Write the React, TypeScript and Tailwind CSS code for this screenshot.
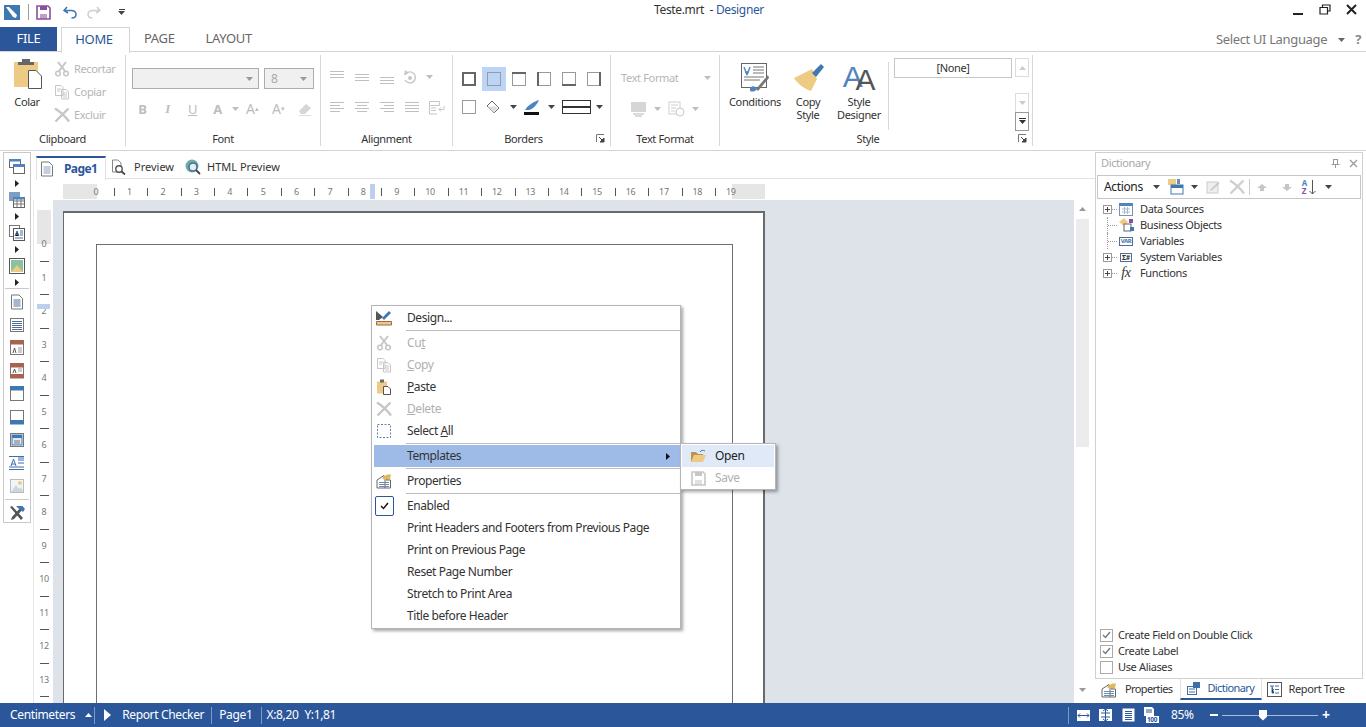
import type { ReactNode } from 'react';

const Svg = ({ w = 16, h = 16, children }: { w?: number; h?: number; children: ReactNode }) => (
  <svg width={w} height={h} viewBox={`0 0 ${w} ${h}`} fill="none" className="block shrink-0">
    {children}
  </svg>
);

const Arrow = ({ color = '#444', up = false }: { color?: string; up?: boolean }) => (
  <svg width="7" height="4" viewBox="0 0 7 4" className="block shrink-0">
    <path d={up ? 'M0 4 L3.5 0 L7 4Z' : 'M0 0 L7 0 L3.5 4Z'} fill={color} />
  </svg>
);

const Scissors = ({ c = '#c6c6c6' }: { c?: string }) => (
  <Svg>
    <path d="M4 1 L11 10 M12 1 L5 10" stroke={c} strokeWidth="2" />
    <circle cx="4" cy="12.5" r="2.3" stroke={c} strokeWidth="1.5" />
    <circle cx="12" cy="12.5" r="2.3" stroke={c} strokeWidth="1.5" />
  </Svg>
);
const CopyIcon = ({ c = '#c6c6c6' }: { c?: string }) => (
  <Svg>
    <path d="M1.5 1.5 H7 L9 3.5 V11.5 H1.5Z M7.5 5.5 H12 L14.5 8 V15 H7.5Z" fill="#fff" stroke={c} />
    <path d="M3 5 H7 M3 7 H6 M9 9 H13 M9 11 H13 M9 13 H13" stroke={c} />
  </Svg>
);
const Cross = ({ c = '#c6c6c6' }: { c?: string }) => (
  <Svg>
    <path d="M1 1.5 C5 4 11 9 15 14.5 M14.5 1.5 L1.5 14.5" stroke={c} strokeWidth="2.4" />
  </Svg>
);
const PasteSmall = () => (
  <Svg>
    <rect x="1" y="2.5" width="10" height="12" fill="#eecb85" />
    <rect x="4" y="0.5" width="4" height="3" fill="#6b6b6b" />
    <path d="M7.5 7.5 H12 L14.5 10 V15.5 H7.5Z" fill="#fff" stroke="#555" />
  </Svg>
);
const PropsIcon = () => (
  <Svg>
    <path d="M1 7 L8 2.5 L9 7 V15 H1Z" fill="#fff" stroke="#666" />
    <path d="M6 5 L11 1.5 H15 L14 6 L9 7.5Z" fill="#e0b95c" />
    <path d="M10 7 H14.5 V15 H9" stroke="#666" />
    <path d="M3 9.5 H13 M3 11.5 H13 M3 13.5 H13" stroke="#6b8db5" />
  </Svg>
);
const DocLines = ({ c = '#4f6f9a' }: { c?: string }) => (
  <Svg>
    <path d="M2.5 1 H10 L13.5 4.5 V15 H2.5Z" fill="#fff" stroke="#777" />
    <path d="M4.5 6 H11.5 M4.5 8 H11.5 M4.5 10 H11.5 M4.5 12 H11.5" stroke={c} />
  </Svg>
);
const SaveIcon = ({ c }: { c: string }) => (
  <Svg w={15} h={15}>
    <path d="M1 1 H12 L14 3 V14 H1Z" stroke={c} strokeWidth="1.6" />
    <rect x="4" y="1" width="7" height="4" fill={c} />
    <rect x="4" y="9" width="7" height="5" fill={c} opacity="0.55" />
  </Svg>
);

const AlignIcon = ({ rows }: { rows: [number, number, number][] }) => (
  <Svg w={16} h={14}>
    {rows.map(([y, a, b], i) => (
      <path key={i} d={`M${a} ${y + 0.5} H${b}`} stroke="#bfbfbf" />
    ))}
  </Svg>
);

const BorderBox = ({ t = 1, r = 1, b = 1, l = 1 }: { t?: number; r?: number; b?: number; l?: number }) => (
  <Svg w={14} h={14}>
    <rect x="0.5" y="0.5" width="13" height="13" stroke="#9a9a9a" />
    {t > 1 && <path d="M0 1 H14" stroke="#666" strokeWidth="2" />}
    {b > 1 && <path d="M0 13 H14" stroke="#666" strokeWidth="2" />}
    {l > 1 && <path d="M1 0 V14" stroke="#666" strokeWidth="2" />}
    {r > 1 && <path d="M13 0 V14" stroke="#666" strokeWidth="2" />}
  </Svg>
);

const SmallAction = ({ icon, label }: { icon: ReactNode; label: string }) => (
  <div className="flex items-center gap-[4px] text-[11px] leading-4 text-[#b5b5b5]">
    {icon}
    <span>{label}</span>
  </div>
);

const Group = ({
  label,
  width,
  launcher,
  children,
}: {
  label: string;
  width: string;
  launcher?: boolean;
  children: ReactNode;
}) => (
  <div className={`flex flex-col h-[91px] border-r border-[#d9d9d9] relative ${width}`}>
    <div className="flex-1 min-h-0">{children}</div>
    <div className={`h-[16px] mb-[-1px] text-center text-[11px] leading-4 text-[#333] ${launcher ? 'pr-4' : ''}`}>{label}</div>
    {launcher && (
      <div className="absolute right-[5px] bottom-[3px]">
        <svg width="9" height="9" viewBox="0 0 9 9" className="block">
          <path d="M0.5 8 V0.5 H8" stroke="#777" fill="none" />
          <path d="M3 3 L7 7 M8 4 V8 H4Z" stroke="#444" fill="#444" />
        </svg>
      </div>
    )}
  </div>
);

const StatusSep = () => <div className="w-px h-[17px] bg-[#7d9ac6] shrink-0" />;

function TitleBar() {
  return (
    <div className="h-[26px] flex items-start">
      <div className="w-[654px] flex items-center pt-1 pl-1">
        <svg width="16" height="15" viewBox="0 0 16 15" className="block">
          <rect width="16" height="15" fill="#3f78b0" />
          <path d="M2 2 L5 2 L13 10 L12 13 L9 12 Z" fill="#fff" />
        </svg>
        <div className="w-px h-[16px] bg-[#9b9b9b] ml-2 mr-[7px]" />
        <SaveIcon c="#8a4f9e" />
        <div className="ml-3">
          <svg width="14" height="13" viewBox="0 0 14 13" className="block">
            <path d="M4 1 L1 4.5 L5 7 M1.5 4.5 H8 C11 4.5 13 6 13 8.5 C13 11 11 12 8.5 12" stroke="#3f78b0" strokeWidth="1.5" fill="none" />
          </svg>
        </div>
        <div className="ml-[10px]">
          <svg width="14" height="13" viewBox="0 0 14 13" className="block">
            <path d="M10 1 L13 4.5 L9 7 M12.5 4.5 H6 C3 4.5 1 6 1 8.5 C1 11 3 12 5.5 12" stroke="#cfcfcf" strokeWidth="1.5" fill="none" />
          </svg>
        </div>
        <div className="ml-[17px] flex flex-col items-center gap-px">
          <div className="w-[6px] h-px bg-[#444]" />
          <Arrow />
        </div>
      </div>
      <div className="pt-[2px] text-[12px] leading-4 text-[#333] whitespace-pre">
        Teste.mrt{'  '}- <span className="text-[#2b579a]">Designer</span>
      </div>
      <div className="flex-1" />
      <div className="flex items-center gap-[15px] pt-[3px] pr-[9px]">
        <div className="w-[10px] h-[2px] bg-[#222] mt-[10px]" />
        <svg width="12" height="11" viewBox="0 0 12 11" className="block ml-[1px]">
          <path d="M3.5 3 V1 H11 V7 H9 M1 3.5 H8.5 V10 H1Z" stroke="#222" strokeWidth="1.2" fill="none" />
        </svg>
        <svg width="11" height="11" viewBox="0 0 11 11" className="block">
          <path d="M1 1 L10 10 M10 1 L1 10" stroke="#222" strokeWidth="2" />
        </svg>
      </div>
    </div>
  );
}

function TabRow() {
  return (
    <div className="h-[26px] flex border-b border-[#d4d4d4] text-[13px]">
      <div className="w-[57px] mt-px bg-[#2b579a] text-white flex items-center justify-center">FILE</div>
      <div className="ml-1 w-[69px] h-[26px] mt-px border border-b-0 border-[#d4d4d4] bg-white text-[#2b579a] flex items-center justify-center pr-[3px] pb-[2px]">
        HOME
      </div>
      <div className="ml-[14px] text-[#666] flex items-center">PAGE</div>
      <div className="ml-[31px] text-[#666] flex items-center">LAYOUT</div>
      <div className="flex-1" />
      <div className="flex items-center text-[#777] pt-[3px]">
        <span>Select UI Language</span>
        <span className="ml-[11px]"><Arrow color="#666" /></span>
        <span className="ml-[10px] mr-[5px] font-bold text-[#888]">?</span>
      </div>
    </div>
  );
}

function Ribbon() {
  return (
    <div className="h-[99px] border-b border-[#d4d4d4] pt-[3px] flex">
      <Group label="Clipboard" width="w-[126px]">
        <div className="flex pl-[14px] pt-[3px]">
          <div className="flex flex-col items-center w-[28px]">
            <svg width="28" height="31" viewBox="0 0 28 31" className="block">
              <rect x="0" y="4" width="24" height="25" fill="#eecb85" />
              <path d="M8 4 V1 H16 V4 H20 V7 H4 V4Z" fill="#666" />
              <path d="M14.5 12.5 H22 L27.5 18 V30.5 H14.5Z" fill="#fff" stroke="#555" />
            </svg>
            <span className="text-[11px] leading-4 text-[#333] mt-[5px] -ml-[2px]">Colar</span>
          </div>
          <div className="ml-[12px] flex flex-col gap-[7px] pt-[3px]">
            <SmallAction icon={<Scissors />} label="Recortar" />
            <SmallAction icon={<CopyIcon />} label="Copiar" />
            <SmallAction icon={<Cross />} label="Excluir" />
          </div>
        </div>
      </Group>

      <Group label="Font" width="w-[195px]">
        <div className="pl-[6px] pt-[13px]">
          <div className="flex gap-[5px]">
            <div className="w-[127px] h-[21px] bg-[#f0f0f0] border border-[#adadad] flex items-center justify-end pr-[5px]">
              <Arrow color="#999" />
            </div>
            <div className="w-[50px] h-[21px] bg-[#f0f0f0] border border-[#adadad] flex items-center justify-between px-[6px] text-[12px] text-[#aaa]">
              8 <Arrow color="#999" />
            </div>
          </div>
          <div className="flex items-center mt-[12px] -ml-[2px] text-[#bdbdbd] text-[13px] leading-4">
            <span className="w-[25px] text-center font-bold">B</span>
            <span className="w-[25px] text-center italic font-['Liberation_Serif',serif] font-bold">I</span>
            <span className="w-[25px] text-center underline">U</span>
            <span className="w-[25px] text-center font-bold">A</span>
            <span className="ml-[2px]"><Arrow color="#bdbdbd" /></span>
            <span className="ml-[7px] w-[14px] text-[14px]">A<sup className="text-[7px]">▴</sup></span>
            <span className="ml-[12px] w-[14px] text-[14px]">A<sup className="text-[7px]">▾</sup></span>
            <svg width="14" height="13" viewBox="0 0 14 13" className="block ml-[12px]">
              <path d="M1 8 L8 1 L13 5 L7 11 H3Z" fill="#d6d6d6" />
              <path d="M1 12.5 H13" stroke="#ddd" />
            </svg>
          </div>
        </div>
      </Group>

      <Group label="Alignment" width="w-[132px]">
        <div className="pl-[8px] pt-[14px]">
          <div className="flex items-center h-[16px]">
            <span className="w-[25px]"><AlignIcon rows={[[1, 1, 15], [4, 1, 15], [7, 1, 15]]} /></span>
            <span className="w-[25px]"><AlignIcon rows={[[4, 1, 15], [7, 1, 15], [10, 1, 15]]} /></span>
            <span className="w-[23px]"><AlignIcon rows={[[7, 1, 15], [10, 1, 15], [13, 1, 15]]} /></span>
            <svg width="15" height="15" viewBox="0 0 15 15" className="block">
              <path d="M3.5 4 A5.5 5.5 0 1 1 3 10" stroke="#c6c6c6" strokeWidth="1.4" fill="none" />
              <circle cx="8" cy="8" r="2" fill="#c6c6c6" />
              <path d="M3 0 L7 3 L2 5.5Z" fill="#c6c6c6" />
            </svg>
            <span className="ml-[9px]"><Arrow color="#bdbdbd" /></span>
          </div>
          <div className="flex items-center mt-[15px]">
            <span className="w-[25px]"><AlignIcon rows={[[1, 1, 15], [4, 1, 11], [7, 1, 15], [10, 1, 11]]} /></span>
            <span className="w-[25px]"><AlignIcon rows={[[1, 1, 15], [4, 3, 13], [7, 1, 15], [10, 3, 13]]} /></span>
            <span className="w-[25px]"><AlignIcon rows={[[1, 1, 15], [4, 5, 15], [7, 1, 15], [10, 5, 15]]} /></span>
            <span className="w-[24px]"><AlignIcon rows={[[1, 1, 15], [4, 1, 15], [7, 1, 15], [10, 1, 15]]} /></span>
            <svg width="17" height="15" viewBox="0 0 17 15" className="block">
              <path d="M1.5 1.5 H11.5 V5.5 H1.5Z M1.5 5.5 V14 H9 M3 8 H8 M3 10.5 H8" stroke="#c6c6c6" fill="none" />
              <path d="M16 6 V9.5 H11 M13 7.5 L11 9.5 L13 11.5" stroke="#c6c6c6" fill="none" />
            </svg>
          </div>
        </div>
      </Group>

      <Group label="Borders" width="w-[158px]" launcher>
        <div className="pl-[9px] pt-[12px]">
          <div className="flex items-center h-[24px]">
            <span className="w-[20px]"><BorderBox t={2} r={2} b={2} l={2} /></span>
            <span className="w-[24px] h-[24px] bg-[#bcd4f5] flex items-center justify-center mr-[1px]"><BorderBox /></span>
            <span className="w-[25px] pl-[5px]"><BorderBox t={2} /></span>
            <span className="w-[25px] pl-[5px]"><BorderBox l={2} /></span>
            <span className="w-[25px] pl-[5px]"><BorderBox b={2} /></span>
            <span className="pl-[5px]"><BorderBox r={2} /></span>
          </div>
          <div className="flex items-center mt-[6px] h-[20px]">
            <span className="w-[24px]"><BorderBox /></span>
            <svg width="15" height="15" viewBox="0 0 15 15" className="block">
              <path d="M6 1 L13 8 L8 13 L1 6Z" stroke="#666" fill="#fff" />
              <path d="M1.5 6.5 H12 L8 13Z" fill="#dfdfdf" />
            </svg>
            <span className="ml-[9px]"><Arrow /></span>
            <svg width="18" height="17" viewBox="0 0 18 17" className="block ml-[6px]">
              <path d="M2 11 C5 6 10 3 16 1 C14 6 10 10 6 11Z" fill="#4f84c0" />
              <rect x="1" y="13" width="15" height="3" fill="#111" />
            </svg>
            <span className="ml-[7px]"><Arrow /></span>
            <div className="ml-[7px] w-[29px] h-[14px] border border-[#333] flex items-center">
              <div className="w-full h-[2px] bg-[#333]" />
            </div>
            <span className="ml-[5px]"><Arrow /></span>
          </div>
        </div>
      </Group>

      <Group label="Text Format" width="w-[109px]">
        <div className="pl-[10px] pt-[15px]">
          <div className="flex items-center text-[11px] leading-4 text-[#b5b5b5] whitespace-nowrap">
            <span>Text Format</span>
            <span className="ml-[26px]"><Arrow color="#bdbdbd" /></span>
          </div>
          <div className="flex items-center mt-[15px] pl-[9px]">
            <svg width="17" height="16" viewBox="0 0 17 16" className="block">
              <rect x="1" y="1" width="15" height="10" fill="#d6d6d6" />
              <path d="M3 13 H14 M5 15 H12" stroke="#cfcfcf" strokeWidth="1.5" />
            </svg>
            <span className="ml-[7px]"><Arrow color="#bdbdbd" /></span>
            <span className="ml-[7px]">
              <svg width="17" height="16" viewBox="0 0 17 16" className="block">
                <rect x="1" y="1" width="11" height="12" stroke="#cfcfcf" fill="#fff" />
                <path d="M3 4 H10 M3 7 H8 M3 10 H7" stroke="#cfcfcf" />
                <circle cx="12" cy="11" r="4" stroke="#c6c6c6" fill="#fff" />
              </svg>
            </span>
            <span className="ml-[7px]"><Arrow color="#bdbdbd" /></span>
          </div>
        </div>
      </Group>

      <Group label="Style" width="w-[313px]" launcher>
        <div className="flex h-full">
          <div className="w-[169px] h-[68px] mt-[7px] flex border-r border-[#d9d9d9]">
            <div className="w-[70px] flex flex-col items-center">
              <svg width="30" height="32" viewBox="0 0 30 32" className="block">
                <rect x="1.5" y="1.5" width="25" height="24" fill="#fff" stroke="#666" />
                <path d="M4 5 L7 13 M10 5 L7 13 M5 10 H9" stroke="#4f84c0" strokeWidth="1.4" />
                <path d="M13 5 H24 M13 8 H24 M13 11 H24 M4 15 H24 M4 18 H20" stroke="#777" />
                <path d="M28 13 L16 27 L18 29 L29 16Z" fill="#777" />
                <path d="M10 26 C12 23 16 24 17 27 C15 30 12 30 10 29Z" fill="#4f84c0" />
              </svg>
              <span className="text-[11px] leading-4 text-[#333] whitespace-nowrap">Conditions</span>
            </div>
            <div className="w-[36px] flex flex-col items-center">
              <svg width="31" height="32" viewBox="0 0 31 32" className="block shrink-0">
                <path d="M1 16 L19 7 L24 17 L18 29 C11 27 4 21 1 16Z" fill="#eecb85" />
                <path d="M19 11 L28 2 L31 5 L23 15Z" fill="#3f78b0" />
              </svg>
              <span className="text-[11px] leading-[13px] text-center text-[#333] mt-[1px]">Copy<br />Style</span>
            </div>
            <div className="ml-[5px] w-[56px] flex flex-col items-center -mt-px">
              <div className="h-[33px] flex items-start text-[30px] leading-[32px] font-['Liberation_Sans',sans-serif]">
                <span className="text-[#4f84c0]">A</span>
                <span className="text-[#555] -ml-[7px] mt-[3px]">A</span>
              </div>
              <span className="text-[11px] leading-[13px] text-center text-[#333] mt-[1px]">Style<br />Designer</span>
            </div>
          </div>
          <div className="pl-[5px] flex gap-[3px]">
            <div className="w-[118px] h-[20px] mt-[3px] border border-[#c6c6c6] text-center text-[11px] leading-[18px] text-[#333]">
              [None]
            </div>
            <div className="flex flex-col mt-[3px]">
              <div className="w-[14px] h-[20px] border border-[#dcdcdc] flex items-center justify-center"><Arrow color="#ccc" up /></div>
              <div className="w-[14px] h-[20px] mt-[16px] border border-[#dcdcdc] flex items-center justify-center"><Arrow color="#ccc" /></div>
              <div className="w-[14px] h-[20px] -mt-px border border-[#999] flex flex-col items-center justify-center gap-px">
                <div className="w-[7px] h-px bg-[#333]" />
                <Arrow color="#333" />
              </div>
            </div>
          </div>
        </div>
      </Group>
    </div>
  );
}

function ToolBand({ top, bot }: { top: string; bot?: string }) {
  return (
    <svg width="16" height="16" viewBox="0 0 16 16" className="block">
      <rect x="0.5" y="0.5" width="11" height="8" fill="#fff" stroke="#666" />
      <rect x="0" y="0" width="12" height="2.5" fill={top} />
      <rect x="4.5" y="5.5" width="11" height="9" fill="#fff" stroke="#666" />
      <rect x="4" y="5" width="12" height="3" fill={bot ?? top} />
    </svg>
  );
}

const ReportIcon = ({ head, foot, body }: { head?: string; foot?: string; body?: ReactNode }) => (
  <svg width="16" height="16" viewBox="0 0 16 16" className="block">
    <rect x="1.5" y="1.5" width="13" height="13" fill="#fff" stroke="#777" />
    {head && <rect x="1" y="0" width="14" height="4.5" fill={head} />}
    {foot && <rect x="1" y="11" width="14" height="4.5" fill={foot} />}
    {body}
  </svg>
);

function Toolbox() {
  const arrow = (
    <svg width="4" height="7" viewBox="0 0 4 7" className="block my-[3px]">
      <path d="M0 0 L4 3.5 L0 7Z" fill="#222" />
    </svg>
  );
  return (
    <div className="w-[28px] ml-[3px] mt-px h-[371px] border border-[#c9c9c9] flex flex-col items-center pt-[6px] shrink-0">
      <div className="flex flex-col items-center gap-[2px] h-[33px]">
        <ToolBand top="#4f84c0" />
        {arrow}
      </div>
      <div className="flex flex-col items-center gap-[2px] h-[33px]">
        <svg width="16" height="16" viewBox="0 0 16 16" className="block">
          <rect x="0" y="0" width="11" height="9" fill="#7f9dc4" />
          <rect x="4.5" y="5.5" width="11" height="10" fill="#fff" stroke="#666" />
          <path d="M8 6 V15 M12 6 V15 M5 9 H15 M5 12 H15" stroke="#777" />
          <rect x="4" y="5" width="12" height="2.5" fill="#4f84c0" />
        </svg>
        {arrow}
      </div>
      <div className="flex flex-col items-center gap-[2px] h-[33px]">
        <svg width="16" height="16" viewBox="0 0 16 16" className="block">
          <rect x="0.5" y="0.5" width="10" height="11" fill="#fff" stroke="#777" />
          <rect x="4.5" y="3.5" width="11" height="12" fill="#fff" stroke="#555" />
          <path d="M6 11 L8 6 L10 11 M7 9.5 H9 M11 6 H14 M11 8 H14 M11 10 H14 M6 13 H14" stroke="#4a6f9c" />
        </svg>
        {arrow}
      </div>
      <div className="flex flex-col items-center gap-[2px] h-[33px]">
        <svg width="16" height="16" viewBox="0 0 16 16" className="block">
          <rect x="0.5" y="0.5" width="15" height="15" fill="#fff" stroke="#555" />
          <rect x="2" y="2" width="12" height="12" fill="#8cc0a0" />
          <path d="M2 14 L8 7 L14 14Z" fill="#eecb85" />
        </svg>
        {arrow}
      </div>
      <div className="w-[24px] h-px bg-[#c9c9c9] mt-[-3px] mb-[5px]" />
      <div className="flex flex-col items-center gap-[7px]">
        <DocLines />
        <svg width="16" height="16" viewBox="0 0 16 16" className="block">
          <rect x="1.5" y="1.5" width="13" height="13" fill="#fff" stroke="#777" />
          <path d="M3 4.5 H13 M3 6.5 H13 M3 8.5 H13 M3 10.5 H13 M3 12.5 H13" stroke="#4f6f9a" />
        </svg>
        <ReportIcon head="#a5644f" body={<><path d="M4 13 L5.5 8 L7 13" stroke="#555" fill="none" /><path d="M9 8 H13 M9 10 H13 M9 12 H13" stroke="#999" /></>} />
        <ReportIcon foot="#a5644f" head="#a5644f" body={<><path d="M4 10 L5.5 6 L7 10" stroke="#555" fill="none" /><path d="M9 6 H13 M9 8 H13" stroke="#999" /></>} />
        <ReportIcon head="#3f78b0" />
        <ReportIcon foot="#3f78b0" />
        <ReportIcon body={<><rect x="3" y="3" width="10" height="10" fill="#dfe8f3" stroke="#3f78b0" /><rect x="3" y="3" width="10" height="3" fill="#3f78b0" /><path d="M5 9 H11 M5 11 H11" stroke="#777" /></>} />
        <svg width="16" height="16" viewBox="0 0 16 16" className="block">
          <path d="M0 1.5 H15 M0 14.5 H15" stroke="#3f6fa8" />
          <path d="M2 11 L4.5 4 L7 11 M3 9 H6" stroke="#3f6fa8" fill="none" />
          <path d="M9 5 H15 M9 8 H15 M0 12 H15 M9 3 H15" stroke="#3f6fa8" />
        </svg>
        <svg width="16" height="16" viewBox="0 0 16 16" className="block">
          <rect x="1.5" y="1.5" width="13" height="13" fill="#f4f4f4" stroke="#bbb" />
          <circle cx="11" cy="5" r="2" fill="#eecb85" />
          <path d="M2 14 L7 7 L10 11 L12 9 L14 14Z" fill="#c9d6e6" />
        </svg>
      </div>
      <div className="w-[24px] h-px bg-[#c9c9c9] mt-[5px] mb-[5px]" />
      <svg width="17" height="16" viewBox="0 0 17 16" className="block">
        <path d="M1 2 L3 1 L14 13 L12 15Z" fill="#555" />
        <path d="M13 1 L3 12 L2 15 L5 14 L15 3Z" fill="#555" />
        <path d="M7 1 H13 L16 4 L14 7 L9 3Z" fill="#3f78b0" />
      </svg>
    </div>
  );
}

function DocTabs() {
  return (
    <div className="h-[26px] mt-[3px] pl-[3px] flex items-stretch shrink-0">
      <div className="w-[70px] mt-[3px] border-t-2 border-x border-[#2b579a] border-x-[#e2e2e2] flex items-center pl-[2px] bg-white -mb-px z-10">
        <span><DocLines c="#8aa0bd" /></span>
        <span className="ml-[9px] text-[12px] font-bold text-[#2b579a] tracking-[-0.6px]">Page1</span>
      </div>
      <div className="flex-1 flex items-center border-b border-[#e2e2e2] pt-[3px] text-[11px] text-[#333] tracking-normal">
        <span className="ml-[4px]">
          <svg width="16" height="16" viewBox="0 0 16 16" className="block">
            <path d="M2.5 1 H8 L11 4 V13 H2.5Z" stroke="#888" fill="#fff" />
            <circle cx="9" cy="10" r="3.2" stroke="#555" strokeWidth="1.4" fill="#fff" />
            <path d="M11.5 12.5 L15 15.5" stroke="#444" strokeWidth="1.8" />
          </svg>
        </span>
        <span className="ml-[8px]">Preview</span>
        <span className="ml-[11px]">
          <svg width="16" height="16" viewBox="0 0 16 16" className="block">
            <circle cx="7" cy="7" r="6.5" fill="#6fae9f" />
            <circle cx="8" cy="8" r="4" stroke="#4f6f9a" strokeWidth="1.6" fill="#e6edf4" />
            <path d="M11 11 L15 15" stroke="#444" strokeWidth="1.8" />
          </svg>
        </span>
        <span className="ml-[6px]">HTML Preview</span>
      </div>
    </div>
  );
}

function HorizontalRuler() {
  const cells = Array.from({ length: 19 }, (_, i) => i);
  return (
    <div className="h-[17px] pt-[1px] pl-[30px] flex shrink-0 mt-[4px]">
      <div className="w-[34px] h-[15px] bg-[#e6e6e6]" />
      <div className="w-[635px] h-[15px] bg-white flex relative">
        {cells.map((n) => (
          <div key={n} className="w-[33.42px] shrink-0 flex items-center">
            <span className="w-[14px] -ml-[8px] text-center text-[9px] leading-[15px] text-[#777]">{n}</span>
            <span className="ml-[10.7px] w-px h-[8px] bg-[#555]" />
          </div>
        ))}
        <div className="absolute left-[273px] top-0 w-[5px] h-[15px] bg-[#bcd0ee]" />
      </div>
      <div className="w-[33px] h-[15px] bg-[#e6e6e6] flex items-center relative">
        <span className="-ml-[6px] text-[9px] leading-[15px] text-[#777] relative">19</span>
      </div>
    </div>
  );
}

function VerticalRuler() {
  const cells = Array.from({ length: 14 }, (_, i) => i);
  return (
    <div className="w-[20px] shrink-0 border-l border-[#e6e6e6] pl-[3px] overflow-hidden">
      <div className="mt-[10px] w-[14px] h-[34px] bg-[#e6e6e6]" />
      <div className="w-[14px] bg-white relative flex flex-col items-center">
        {cells.map((n) => (
          <div key={n} className="h-[33.5px] w-full shrink-0 flex flex-col items-center">
            <span className="h-[16px] -mt-[8px] text-[9px] leading-4 text-[#777]">{n}</span>
            <span className="mt-[8.5px] w-[9px] h-px bg-[#555]" />
          </div>
        ))}
        <div className="absolute left-0 top-[60px] w-[13px] h-[5px] bg-[#bcd0ee]" />
      </div>
    </div>
  );
}

function Canvas() {
  return (
    <div className="flex-1 min-h-0 flex">
      <VerticalRuler />
      <div className="flex-1 bg-[#dee3ea] pl-[10px] pt-[11px] overflow-hidden">
        <div className="w-[702px] h-[600px] bg-white border-t-2 border-r-2 border-l border-[#6a6a6a] pl-[32px] pt-[31px]">
          <div className="w-[637px] h-[600px] border border-[#6e6e6e]" />
        </div>
      </div>
      <div className="w-[15px] ml-[1px] mr-[5px] flex flex-col items-center bg-white">
        <div className="h-[17px] pt-[7px]"><Arrow color="#999" up /></div>
        <div className="w-[13px] h-[228px] mt-[2px] bg-[#ececec]" />
        <div className="flex-1" />
        <div className="h-[15px]"><Arrow color="#999" /></div>
      </div>
    </div>
  );
}

const PlusBox = () => (
  <svg width="9" height="9" viewBox="0 0 9 9" className="block">
    <rect x="0.5" y="0.5" width="8" height="8" fill="#fff" stroke="#999" />
    <path d="M2 4.5 H7 M4.5 2 V7" stroke="#444" />
  </svg>
);

function TreeRow({ plus, icon, label }: { plus?: boolean; icon: ReactNode; label: string }) {
  return (
    <div className="h-[16px] flex items-center text-[11px] text-[#333]">
      <span className="w-[9px] flex justify-center">
        {plus ? <PlusBox /> : <span className="w-px h-[16px] border-l border-dotted border-[#999]" />}
      </span>
      <span className={`border-t border-dotted border-[#999] ${plus ? 'w-[5px]' : 'w-[9px] -ml-[4px]'}`} />
      <span className="w-[16px] flex justify-center ml-[1px]">{icon}</span>
      <span className="ml-[6px]">{label}</span>
    </div>
  );
}

function Check({ on, label }: { on?: boolean; label: string }) {
  return (
    <div className="h-[16px] flex items-center text-[11px] text-[#333]">
      <span className="w-[13px] h-[13px] border border-[#aaa] flex items-center justify-center">
        {on && (
          <svg width="9" height="8" viewBox="0 0 9 8" className="block">
            <path d="M1 4 L3.5 6.5 L8 1" stroke="#777" strokeWidth="1.4" fill="none" />
          </svg>
        )}
      </span>
      <span className="ml-[5px]">{label}</span>
    </div>
  );
}

function DictionaryPanel() {
  return (
    <div className="w-[271px] shrink-0 flex flex-col pr-[3px] mt-px">
      <div className="flex-1 min-h-0 border border-[#d0d0d0] flex flex-col px-[1px]">
        <div className="h-[20px] mb-[2px] flex items-center pl-[4px] pr-[2px] text-[11px] text-[#a8a8a8]">
          <span>Dictionary</span>
          <span className="flex-1" />
          <svg width="9" height="9" viewBox="0 0 9 9" className="block">
            <path d="M2 0.5 H7 M2.5 1 V5 M6.5 1 V5 M0.5 5.5 H8.5 M4.5 6 V9" stroke="#999" fill="none" />
          </svg>
          <svg width="9" height="9" viewBox="0 0 9 9" className="block ml-[9px] mr-[1px]">
            <path d="M1 1 L8 8 M8 1 L1 8" stroke="#999" strokeWidth="1.2" />
          </svg>
        </div>
        <div className="h-[24px] border border-[#c6c6c6] flex items-center pl-[6px] text-[12px] text-[#222]">
          <span>Actions</span>
          <span className="ml-[10px]"><Arrow /></span>
          <span className="ml-[8px]">
            <svg width="16" height="16" viewBox="0 0 16 16" className="block">
              <rect x="0" y="0" width="8" height="6" fill="#eecb85" />
              <rect x="3" y="6" width="12" height="9" fill="#fff" stroke="#3f78b0" />
              <rect x="3" y="6" width="12" height="3" fill="#3f78b0" />
              <path d="M9 0 H12 V5 H9Z" fill="#6b8db5" />
            </svg>
          </span>
          <span className="ml-[7px]"><Arrow /></span>
          <span className="ml-[8px]">
            <svg width="14" height="14" viewBox="0 0 14 14" className="block">
              <rect x="1" y="2" width="11" height="11" stroke="#ccc" fill="#eee" />
              <path d="M4 10 L12 2 L13.5 3.5 L5 11Z" fill="#c8c8c8" />
            </svg>
          </span>
          <span className="ml-[9px]"><Cross c="#cfcfcf" /></span>
          <span className="w-px h-[16px] bg-[#ccc] ml-[4px]" />
          <span className="ml-[7px]">
            <svg width="10" height="7" viewBox="0 0 10 7" className="block">
              <path d="M5 0 L10 4 H7 V7 H3 V4 H0Z" fill="#c6c6c6" />
            </svg>
          </span>
          <span className="ml-[15px]">
            <svg width="10" height="7" viewBox="0 0 10 7" className="block">
              <path d="M5 7 L10 3 H7 V0 H3 V3 H0Z" fill="#c6c6c6" />
            </svg>
          </span>
          <span className="ml-[10px] flex items-center">
            <span className="flex flex-col text-[8px] leading-[8px] font-bold">
              <span className="text-[#4f84c0]">A</span>
              <span className="text-[#8a4f9e]">Z</span>
            </span>
            <svg width="7" height="15" viewBox="0 0 7 15" className="block ml-[2px]">
              <path d="M3.5 0 V14 M0.5 11 L3.5 14 L6.5 11" stroke="#555" fill="none" />
            </svg>
          </span>
          <span className="ml-[9px]"><Arrow /></span>
        </div>
        <div className="pl-[6px] pt-[2px]">
          <TreeRow
            plus
            label="Data Sources"
            icon={
              <svg width="14" height="13" viewBox="0 0 14 13" className="block">
                <rect x="0.5" y="0.5" width="13" height="12" fill="#fff" stroke="#7a93b5" />
                <rect x="0" y="0" width="14" height="3" fill="#4f84c0" />
                <path d="M3 6 H11 M3 9 H11 M5.5 4 V11 M8.5 4 V11" stroke="#a8b8cc" />
              </svg>
            }
          />
          <TreeRow
            label="Business Objects"
            icon={
              <svg width="15" height="14" viewBox="0 0 15 14" className="block">
                <path d="M0 4 L5 0 L9 4 L5 8Z" fill="#eecb85" />
                <path d="M10 1 H14 V5 H10Z" fill="#8a4f9e" />
                <rect x="5" y="6" width="7" height="7" fill="#fff" stroke="#666" />
                <path d="M11 9 H15 V13 H11Z" fill="#3f78b0" />
              </svg>
            }
          />
          <TreeRow
            label="Variables"
            icon={
              <span className="h-[9px] px-[1px] border border-[#4f6f9a] text-[6px] leading-[7px] font-bold text-[#3f6fa8]">VAR</span>
            }
          />
          <TreeRow
            plus
            label="System Variables"
            icon={
              <span className="h-[9px] px-[1px] border border-[#4f6f9a] text-[7px] leading-[7px] font-bold text-[#333]">Σ#</span>
            }
          />
          <TreeRow
            plus
            label="Functions"
            icon={<span className="font-['Liberation_Serif',serif] italic text-[14px] leading-4 text-[#333]">fx</span>}
          />
        </div>
        <div className="flex-1" />
        <div className="pl-[3px] pb-[3px]">
          <Check on label="Create Field on Double Click" />
          <Check on label="Create Label" />
          <Check label="Use Aliases" />
        </div>
      </div>
      <div className="h-[21px] mb-[3px] flex items-center shrink-0 text-[11px] text-[#333]">
        <span className="ml-[6px]"><PropsIcon /></span>
        <span className="ml-[8px] tracking-[-0.6px]">Properties</span>
        <div className="ml-[8px] w-[82px] h-[21px] border-x border-[#e2e2e2] border-b-2 border-b-[#2b579a] flex items-center pl-[6px] text-[#2b579a]">
          <svg width="14" height="13" viewBox="0 0 14 13" className="block">
            <rect x="0.5" y="4.5" width="9" height="8" fill="#fff" stroke="#3f6fa8" />
            <rect x="6" y="0" width="7" height="6" fill="#3f6fa8" />
            <path d="M2 7 H8 M2 10 H8" stroke="#3f6fa8" />
          </svg>
          <span className="ml-[6px] tracking-[-0.6px]">Dictionary</span>
        </div>
        <span className="ml-[5px]">
          <svg width="15" height="15" viewBox="0 0 15 15" className="block">
            <rect x="0.5" y="0.5" width="14" height="14" fill="#fff" stroke="#555" />
            <path d="M3 4 H7 M5 4 V11 H7 M5 7.5 H7 M8 4 H12 M8 7.5 H12 M8 11 H12" stroke="#3f6fa8" />
          </svg>
        </span>
        <span className="ml-[6px]">Report Tree</span>
      </div>
    </div>
  );
}

function StatusBar() {
  return (
    <div className="h-[24px] bg-[#2b579a] text-white text-[12px] flex items-center shrink-0">
      <span className="ml-[10px]">Centimeters</span>
      <span className="ml-[10px]"><Arrow color="#fff" up /></span>
      <span className="ml-[2px]"><StatusSep /></span>
      <svg width="7" height="12" viewBox="0 0 7 12" className="block ml-[9px]">
        <path d="M0 0 L7 6 L0 12Z" fill="#fff" />
      </svg>
      <span className="ml-[11px]">Report Checker</span>
      <span className="ml-[7px]"><StatusSep /></span>
      <span className="ml-[7px]">Page1</span>
      <span className="ml-[9px]"><StatusSep /></span>
      <span className="ml-[4px]">X:8,20</span>
      <span className="ml-[6px]">Y:1,81</span>
      <span className="flex-1" />
      <StatusSep />
      <span className="ml-[7px]">
        <svg width="15" height="13" viewBox="0 0 15 13" className="block">
          <rect x="1" y="1" width="13" height="11" fill="#fff" />
          <path d="M2 6.5 H13 M4 4.5 L2 6.5 L4 8.5 M11 4.5 L13 6.5 L11 8.5" stroke="#2b579a" fill="none" />
        </svg>
      </span>
      <span className="ml-[8px]">
        <svg width="13" height="14" viewBox="0 0 13 14" className="block">
          <rect x="0" y="1" width="13" height="12" fill="#fff" />
          <path d="M6.5 1 V13 M4 3 L6.5 1 L9 3 M4 11 L6.5 13 L9 11 M2 5 H11 M2 9 H11" stroke="#2b579a" fill="none" />
        </svg>
      </span>
      <span className="ml-[10px]">
        <svg width="13" height="14" viewBox="0 0 13 14" className="block">
          <rect x="0.5" y="0.5" width="12" height="13" fill="#fff" />
          <path d="M3 3.5 H10 M3 5.5 H10 M3 7.5 H10 M3 9.5 H10 M3 11.5 H10" stroke="#2b579a" />
        </svg>
      </span>
      <span className="ml-[8px]">
        <svg width="16" height="16" viewBox="0 0 16 16" className="block">
          <path d="M1 0 H9 L11 2 V9 H1Z" fill="#fff" />
          <path d="M3 3 H9 M3 5 H9" stroke="#2b579a" />
          <rect x="3" y="9" width="13" height="7" fill="#fff" />
          <text x="4" y="15" fontSize="6.5" fontWeight="700" fill="#2b579a">100</text>
        </svg>
      </span>
      <span className="ml-[12px] w-[24px]">85%</span>
      <span className="ml-[15px] w-[8px] h-[2px] bg-white" />
      <span className="ml-[4px] w-[96px] h-px bg-[#a9bede] flex items-center relative">
        <span className="absolute left-[37px] -top-[5px] w-[8px] h-[11px] bg-white [clip-path:polygon(0_0,100%_0,100%_65%,50%_100%,0_65%)]" />
      </span>
      <span className="ml-[4px] mr-[36px] text-[14px] leading-none font-bold w-[8px]">+</span>
    </div>
  );
}

function MenuRow({
  icon,
  label,
  disabled,
  active,
  right,
  check,
}: {
  icon?: ReactNode;
  label: ReactNode;
  disabled?: boolean;
  active?: boolean;
  right?: ReactNode;
  check?: boolean;
}) {
  return (
    <div className={`h-[22px] flex items-center ${active ? 'bg-[#9dbbe6]' : ''} ${disabled ? 'text-[#b0b0b0]' : 'text-[#333]'}`}>
      <span className={`w-[33px] flex shrink-0 ${check ? 'pl-[1px]' : 'pl-[2px]'}`}>
        {check ? (
          <span className="w-[19px] h-[20px] border border-[#2b579a] rounded-[2px] flex items-center justify-center">
            <svg width="9" height="8" viewBox="0 0 9 8" className="block">
              <path d="M1 4 L3.5 6.5 L8 1" stroke="#111" strokeWidth="1.4" fill="none" />
            </svg>
          </span>
        ) : (
          icon
        )}
      </span>
      <span className="flex-1 whitespace-nowrap tracking-[-0.42px]">{label}</span>
      {right}
    </div>
  );
}

const MenuSep = () => <div className="h-[3px] ml-[32px] flex items-center"><div className="w-full h-px bg-[#bdbdbd]" /></div>;

function ContextMenu() {
  return (
    <div className="absolute left-[371px] top-[305px] w-[310px] bg-white border border-[#b5b5b5] shadow-[2px_2px_3px_rgba(0,0,0,0.35)] py-[1px] pl-[2px] text-[12px] z-20">
      <MenuRow
        label="Design..."
        icon={
          <svg width="16" height="16" viewBox="0 0 16 16" className="block">
            <path d="M0 1 L7 7 L3 10 H0Z" fill="#555" />
            <path d="M6 8 L13 1 L15 3 L8 10Z" fill="#3f78b0" />
            <path d="M0.5 11.5 H15.5 V15 H0.5Z" stroke="#a5644f" fill="#eecb85" />
          </svg>
        }
      />
      <MenuSep />
      <MenuRow disabled label={<>Cu<u>t</u></>} icon={<Scissors />} />
      <MenuRow disabled label={<><u>C</u>opy</>} icon={<CopyIcon />} />
      <MenuRow label={<><u>P</u>aste</>} icon={<PasteSmall />} />
      <MenuRow disabled label={<><u>D</u>elete</>} icon={<Cross />} />
      <MenuRow
        label={<>Select <u>A</u>ll</>}
        icon={
          <svg width="14" height="14" viewBox="0 0 14 14" fill="none" className="block ml-[1px]">
            <rect x="0.5" y="0.5" width="13" height="13" fill="none" stroke="#5b82b8" strokeDasharray="2 1.5" />
          </svg>
        }
      />
      <MenuSep />
      <MenuRow
        active
        label="Templates"
        right={
          <svg width="4" height="7" viewBox="0 0 4 7" className="block mr-[10px]">
            <path d="M0 0 L4 3.5 L0 7Z" fill="#111" />
          </svg>
        }
      />
      <MenuSep />
      <MenuRow label="Properties" icon={<PropsIcon />} />
      <MenuSep />
      <MenuRow check label="Enabled" />
      <MenuRow label="Print Headers and Footers from Previous Page" />
      <MenuRow label="Print on Previous Page" />
      <MenuRow label="Reset Page Number" />
      <MenuRow label="Stretch to Print Area" />
      <MenuRow label="Title before Header" />

      <div className="absolute left-[308px] top-[137px] w-[96px] bg-white border border-[#b5b5b5] shadow-[2px_2px_3px_rgba(0,0,0,0.35)] p-[1px] pb-0">
        <div className="h-[22px] bg-[#dfe9f8] flex items-center text-[#222]">
          <span className="w-[33px] flex justify-center">
            <svg width="17" height="14" viewBox="0 0 17 14" className="block">
              <path d="M1 3 H6 L8 5 H13 V13 H1Z" fill="#b8964f" />
              <path d="M1 13 L4 6 H16 L13 13Z" fill="#eecb85" />
              <path d="M10 3 C11 1 13 1 15 2" stroke="#3f78b0" fill="none" />
            </svg>
          </span>
          <span>Open</span>
        </div>
        <div className="h-[22px] flex items-center text-[#b0b0b0]">
          <span className="w-[33px] flex justify-center"><SaveIcon c="#c6c6c6" /></span>
          <span>Save</span>
        </div>
      </div>
    </div>
  );
}

export default function App() {
  return (
    <div className="relative w-[1366px] h-[727px] overflow-hidden bg-white flex flex-col font-['Noto_Sans',sans-serif] tracking-[-0.35px]">
      <TitleBar />
      <TabRow />
      <Ribbon />
      <div className="flex-1 min-h-0 flex">
        <Toolbox />
        <div className="flex-1 min-w-0 flex flex-col ml-[2px] mt-[-1px]">
          <DocTabs />
          <HorizontalRuler />
          <Canvas />
        </div>
        <DictionaryPanel />
      </div>
      <StatusBar />
      <ContextMenu />
    </div>
  );
}
